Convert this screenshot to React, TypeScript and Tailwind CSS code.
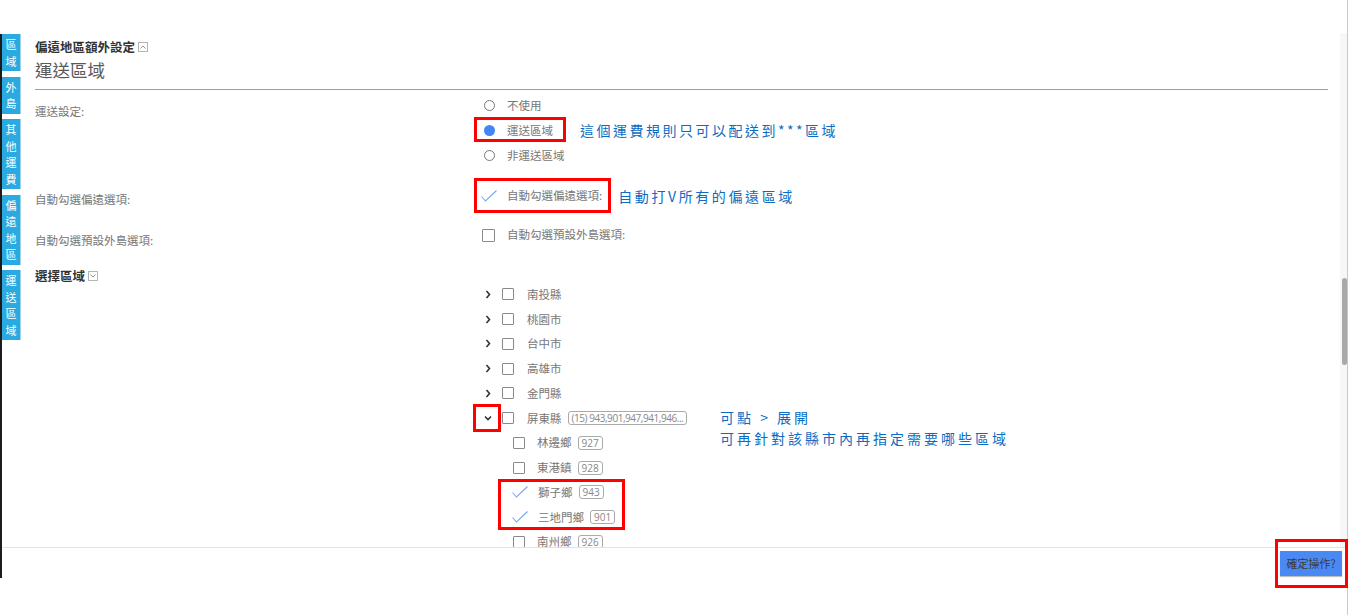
import React from 'react';

interface Town {
  name: string;
  zip: string;
  checked?: boolean;
}

const counties = ['南投縣', '桃園市', '台中市', '高雄市', '金門縣'];

const towns: Town[] = [
  { name: '林邊鄉', zip: '927' },
  { name: '東港鎮', zip: '928' },
  { name: '獅子鄉', zip: '943', checked: true },
  { name: '三地門鄉', zip: '901', checked: true },
  { name: '南州鄉', zip: '926' },
];

const sideTabs = [['區', '域'], ['外', '島'], ['其', '他', '運', '費'], ['偏', '遠', '地', '區'], ['運', '送', '區', '域']];

const CheckMark = () => (
  <svg width="16" height="12" viewBox="0 0 16 12" className="shrink-0">
    <polyline points="0.5,6.5 4.5,11 15.5,0.5" fill="none" stroke="#7aa7f3" strokeWidth="1.1" />
  </svg>
);

const Box = ({ size = 12 }: { size?: number }) => (
  <span
    className="block shrink-0 border border-[#8a8a8a] rounded-[1px] bg-white"
    style={{ width: size, height: size }}
  />
);

const Chevron = ({ open }: { open?: boolean }) => (
  <span className="w-[14px] flex justify-center shrink-0">
    {open ? (
      <svg width="8" height="6" viewBox="0 0 8 6">
        <polyline points="1,1.5 4,4.5 7,1.5" fill="none" stroke="#333" strokeWidth="1.6" />
      </svg>
    ) : (
      <svg width="6" height="9" viewBox="0 0 6 9">
        <polyline points="1.5,1 4.5,4.5 1.5,8" fill="none" stroke="#333" strokeWidth="1.6" />
      </svg>
    )}
  </span>
);

const ToggleIcon = ({ up }: { up?: boolean }) => (
  <span className="ml-[3px] w-[10px] h-[10px] border border-[#b5b5b5] flex items-center justify-center">
    <svg width="6" height="4" viewBox="0 0 6 4">
      <polyline
        points={up ? '0.5,3.5 3,1 5.5,3.5' : '0.5,0.5 3,3 5.5,0.5'}
        fill="none"
        stroke="#888"
        strokeWidth="0.9"
      />
    </svg>
  </span>
);

const Tag = ({ children, tight }: { children: React.ReactNode; tight?: boolean }) => (
  <span
    className={`ml-[6px] h-[14px] px-[3px] border border-[#aaa] rounded-[3px] text-[10px] leading-[12px] text-[#888] flex items-center font-['Open_Sans','Noto_Sans',sans-serif] ${
      tight ? 'tracking-[-0.45px]' : ''
    }`}
  >
    {children}
  </span>
);

const RedBox = ({ className }: { className: string }) => (
  <div className={`absolute border-[3px] border-[#ff0000] pointer-events-none ${className}`} />
);

const App: React.FC = () => {
  return (
    <div className="relative w-[1349px] h-[615px] overflow-hidden bg-white flex font-['Noto_Sans_CJK_TC','Noto_Sans',sans-serif]">
      {/* dark edge of window behind */}
      <div className="w-[2px] shrink-0 pt-[34px]">
        <div className="h-[544px] bg-[#1c1c1c]" />
      </div>

      <div className="flex-1 flex flex-col">
        <div className="h-[547px] flex">
          {/* side tabs */}
          <div className="w-[18px] shrink-0 pt-[34px] flex flex-col gap-[5.5px]">
            {sideTabs.map((chars, i) => (
              <div
                key={i}
                className="bg-[#2aaae0] text-white text-[11px] leading-[16.5px] py-[2px] flex flex-col items-center shadow-[1px_0_0_#9fd3ea]"
              >
                {chars.map((c, j) => (
                  <span key={j}>{c}</span>
                ))}
              </div>
            ))}
          </div>

          {/* main form */}
          <div className="flex-1 overflow-hidden pl-[15px] pr-[12px] pt-[39px]">
            <div className="h-[16px] flex items-center text-[12.5px] font-bold text-[#333]">
              偏遠地區額外設定
              <ToggleIcon up />
            </div>
            <div className="mt-[3px] text-[17.5px] leading-[24px] text-[#5a5a5a]">運送區域</div>
            <div className="mt-[7px] h-px bg-[#ff7676]" />

            <div className="mt-[3px] text-[11.5px] text-[#777]">
              {/* 運送設定 */}
              <div className="flex">
                <div className="w-[446px] shrink-0 pt-[10px] leading-[16px]">運送設定:</div>
                <div className="flex flex-col">
                  <div className="h-[25px] flex items-center">
                    <span className="ml-[3px] w-[11px] h-[11px] rounded-full border border-[#777]" />
                    <span className="ml-[12px]">不使用</span>
                  </div>
                  <div className="h-[25px] flex items-center">
                    <span className="ml-[3px] w-[11px] h-[11px] rounded-full bg-[#4285f4]" />
                    <span className="ml-[12px]">運送區域</span>
                    <span className="ml-[27px] text-[14px] tracking-[2.5px] text-[#0b6cc2]">
                      這個運費規則只可以配送到***區域
                    </span>
                  </div>
                  <div className="h-[25px] flex items-center">
                    <span className="ml-[3px] w-[11px] h-[11px] rounded-full border border-[#777]" />
                    <span className="ml-[12px]">非運送區域</span>
                  </div>
                </div>
              </div>

              {/* 自動勾選偏遠選項 */}
              <div className="mt-[12px] h-[32px] flex">
                <div className="w-[446px] shrink-0 pt-[11px] leading-[16px]">自動勾選偏遠選項:</div>
                <div className="flex items-center">
                  <CheckMark />
                  <span className="ml-[10px]">自動勾選偏遠選項:</span>
                  <span className="ml-[16px] text-[14px] tracking-[2.6px] text-[#0b6cc2]">自動打V所有的偏遠區域</span>
                </div>
              </div>

              {/* 自動勾選預設外島選項 */}
              <div className="mt-[12px] h-[22px] flex">
                <div className="w-[446px] shrink-0 pt-[8px] leading-[16px]">自動勾選預設外島選項:</div>
                <div className="flex items-center">
                  <span className="ml-[1px] flex">
                    <Box size={13} />
                  </span>
                  <span className="ml-[12px]">自動勾選預設外島選項:</span>
                </div>
              </div>

              {/* 選擇區域 */}
              <div className="mt-[22px] flex">
                <div className="w-[446px] shrink-0 leading-[16px] flex items-center h-[16px] text-[12.5px] font-bold text-[#333]">
                  選擇區域
                  <ToggleIcon />
                </div>
                <div className="pt-[14px] flex flex-col">
                  {counties.map((name) => (
                    <div key={name} className="h-[24.75px] flex items-center">
                      <Chevron />
                      <span className="ml-[7px] flex">
                        <Box />
                      </span>
                      <span className="ml-[13px]">{name}</span>
                    </div>
                  ))}
                  <div className="h-[24.75px] flex items-center">
                    <Chevron open />
                    <span className="ml-[7px] flex">
                      <Box />
                    </span>
                    <span className="ml-[13px]">屏東縣</span>
                    <Tag tight>(15) 943,901,947,941,946...</Tag>
                  </div>
                  {towns.map((t) => (
                    <div key={t.name} className="h-[24.75px] flex items-center pl-[31px]">
                      {t.checked ? (
                        <span className="w-[14px] flex">
                          <CheckMark />
                        </span>
                      ) : (
                        <span className="ml-[1px] flex">
                          <Box />
                        </span>
                      )}
                      <span className="ml-[12px]">{t.name}</span>
                      <Tag>{t.zip}</Tag>
                    </div>
                  ))}
                </div>
              </div>
            </div>
          </div>

          {/* scrollbar */}
          <div className="w-[7px] shrink-0 pt-[33px]">
            <div className="h-full bg-[#f7f7f7] pt-[245px] pl-[2px]">
              <div className="w-[5px] h-[87px] rounded-[3px] bg-[#a9a9a9]" />
            </div>
          </div>
        </div>

        {/* footer */}
        <div className="flex-1 border-t border-[#e2e2e2] flex justify-end pt-[3px] pr-[5px]">
          <button className="w-[62px] h-[25px] bg-[#4a89f3] text-[11px] text-[#3a3a3a] shadow-[0_1px_1px_rgba(0,0,0,0.25)]">
            確定操作?
          </button>
        </div>
      </div>

      <div className="w-[2px] shrink-0 border-l border-[#c9c9c9]" />

      {/* annotation overlays */}
      <RedBox className="left-[474px] top-[117px] w-[92px] h-[25px]" />
      <RedBox className="left-[474px] top-[178px] w-[137px] h-[35px]" />
      <RedBox className="left-[473px] top-[404px] w-[28px] h-[28px]" />
      <RedBox className="left-[498px] top-[479px] w-[127px] h-[51px]" />
      <RedBox className="left-[1275px] top-[539px] w-[73px] h-[49px]" />
      <div className="absolute left-[720px] top-[407px] text-[14px] leading-[21px] tracking-[3px] text-[#0b6cc2]">
        <div>可點 &gt; 展開</div>
        <div>可再針對該縣市內再指定需要哪些區域</div>
      </div>
    </div>
  );
};

export default App;
